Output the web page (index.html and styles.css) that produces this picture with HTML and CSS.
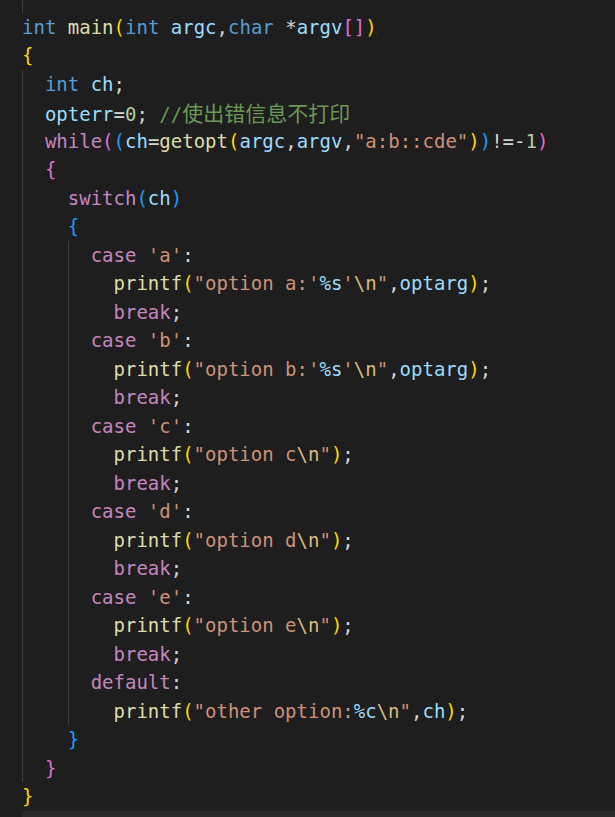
FILE: index.html
```html
<!DOCTYPE html>
<html lang="zh">
<head>
<meta charset="utf-8">
<title>getopt example</title>
<link rel="stylesheet" href="styles.css">
</head>
<body>
<div class="editor">
  <div class="top guide"></div>
  <div class="ln"><span class="k">int</span> <span class="f">main</span><span class="b1">(</span><span class="k">int</span> <span class="v">argc</span>,<span class="k">char</span> *<span class="v">argv</span><span class="b2">[]</span><span class="b1">)</span></div>
  <div class="ln"><span class="b1">{</span></div>
  <div class="guide">
    <div class="ln">  <span class="k">int</span> <span class="v">ch</span>;</div>
    <div class="ln">  <span class="v">opterr</span>=<span class="n">0</span>; <span class="cm">//<span class="cjk">使出错信息不打印</span></span></div>
    <div class="ln">  <span class="c">while</span><span class="b2">(</span><span class="b3">(</span><span class="v">ch</span>=<span class="f">getopt</span><span class="b1">(</span><span class="v">argc</span>,<span class="v">argv</span>,<span class="s">"a:b::cde"</span><span class="b1">)</span><span class="b3">)</span>!=-<span class="n">1</span><span class="b2">)</span></div>
    <div class="ln">  <span class="b2">{</span></div>
    <div class="ln">    <span class="c">switch</span><span class="b3">(</span><span class="v">ch</span><span class="b3">)</span></div>
    <div class="ln">    <span class="b3">{</span></div>
    <div class="guide guide2">
      <div class="ln">      <span class="c">case</span> <span class="s">'a'</span>:</div>
      <div class="ln">        <span class="f">printf</span><span class="b1">(</span><span class="s">"option a:'</span><span class="v">%s</span><span class="s">'</span><span class="e">\n</span><span class="s">"</span>,<span class="v">optarg</span><span class="b1">)</span>;</div>
      <div class="ln">        <span class="c">break</span>;</div>
      <div class="ln">      <span class="c">case</span> <span class="s">'b'</span>:</div>
      <div class="ln">        <span class="f">printf</span><span class="b1">(</span><span class="s">"option b:'</span><span class="v">%s</span><span class="s">'</span><span class="e">\n</span><span class="s">"</span>,<span class="v">optarg</span><span class="b1">)</span>;</div>
      <div class="ln">        <span class="c">break</span>;</div>
      <div class="ln">      <span class="c">case</span> <span class="s">'c'</span>:</div>
      <div class="ln">        <span class="f">printf</span><span class="b1">(</span><span class="s">"option c</span><span class="e">\n</span><span class="s">"</span><span class="b1">)</span>;</div>
      <div class="ln">        <span class="c">break</span>;</div>
      <div class="ln">      <span class="c">case</span> <span class="s">'d'</span>:</div>
      <div class="ln">        <span class="f">printf</span><span class="b1">(</span><span class="s">"option d</span><span class="e">\n</span><span class="s">"</span><span class="b1">)</span>;</div>
      <div class="ln">        <span class="c">break</span>;</div>
      <div class="ln">      <span class="c">case</span> <span class="s">'e'</span>:</div>
      <div class="ln">        <span class="f">printf</span><span class="b1">(</span><span class="s">"option e</span><span class="e">\n</span><span class="s">"</span><span class="b1">)</span>;</div>
      <div class="ln">        <span class="c">break</span>;</div>
      <div class="ln">      <span class="c">default</span>:</div>
      <div class="ln">        <span class="f">printf</span><span class="b1">(</span><span class="s">"other option:</span><span class="v">%c</span><span class="e">\n</span><span class="s">"</span>,<span class="v">ch</span><span class="b1">)</span>;</div>
    </div>
    <div class="ln">    <span class="b3">}</span></div>
    <div class="ln">  <span class="b2">}</span></div>
  </div>
  <div class="ln"><span class="b1">}</span></div>
  <div class="hscroll"></div>
</div>
</body>
</html>
```

FILE: styles.css
```css
html, body {
  margin: 0;
  padding: 0;
  background: #1e1e1e;
}
body {
  width: 615px;
  height: 817px;
  overflow: hidden;
}
.editor {
  padding-left: 22px;
  font-family: "DejaVu Sans Mono", "Liberation Mono", monospace;
  font-size: 19px;
  color: #d4d4d4;
}
.top {
  height: 12.75px;
}
.ln {
  height: 28.5px;
  line-height: 28.5px;
  white-space: pre;
}
.guide {
  background-image: linear-gradient(#404040, #404040);
  background-repeat: no-repeat;
  background-size: 1px 100%;
  background-position: 0 0;
}
.guide2 {
  background-position: 46px 0;
}
.hscroll {
  height: 8px;
  background: #2a2a2a;
}
.k { color: #569cd6; }
.f { color: #dcdcaa; }
.v { color: #9cdcfe; }
.c { color: #c586c0; }
.s { color: #ce9178; }
.e { color: #d7ba7d; }
.n { color: #b5cea8; }
.cm { color: #6a9955; }
.b1 { color: #ffd700; }
.b2 { color: #da70d6; }
.b3 { color: #179fff; }
.cjk {
  font-family: "Noto Sans CJK SC", sans-serif;
  font-size: 21px;
}
```
